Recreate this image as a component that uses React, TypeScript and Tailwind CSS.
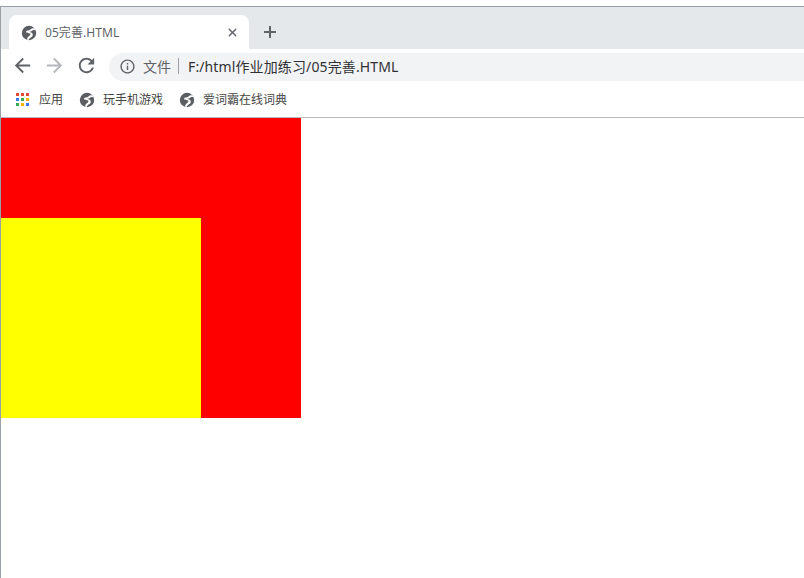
import { X } from 'lucide-react'

const font = "font-['Noto_Sans','Noto_Sans_CJK_SC',sans-serif]"

function NavIcon({ d, className }: { d: string; className: string }) {
  return (
    <svg viewBox="0 0 24 24" className={`h-[23px] w-[23px] shrink-0 fill-current ${className}`}>
      <path d={d} />
    </svg>
  )
}

function Globe() {
  return (
    <svg viewBox="0 0 16 16" className="h-[16px] w-[16px] shrink-0">
      <circle cx="8" cy="8" r="7.2" fill="#5a5d61" />
      <path d="M13.6 3.6C12 2.9 10.6 3.2 9.8 4.2 9 5.2 7.6 5.4 6.4 5.6 5.3 5.8 4.7 6.8 5.4 7.6 6.2 8.4 8 8 9 8.6 9.9 9.2 9.3 10.4 8.3 10.9 7.2 11.5 6.2 12.6 6 14.6L7.6 14.9C8.4 13.4 9.4 12.6 10.5 12 12 11.2 12.3 9.2 11 8 10 7 8.5 7.2 8 7 9.2 6.9 10.6 6.4 11.4 5.5 12 4.9 13 4.9 14.2 5.2Z" fill="#ffffff" />
    </svg>
  )
}

function AppsGrid() {
  const colors = [
    'bg-[#e0493a]', 'bg-[#e0493a]', 'bg-[#e0493a]',
    'bg-[#3b78e7]', 'bg-[#3aa757]', 'bg-[#f5b400]',
    'bg-[#3aa757]', 'bg-[#f5b400]', 'bg-[#3b78e7]',
  ]
  return (
    <div className="grid h-[13px] w-[13px] grid-cols-3 gap-[2px]">
      {colors.map((c, i) => (
        <span key={i} className={`h-[3px] w-[3px] ${c}`} />
      ))}
    </div>
  )
}

function Bookmark({ label }: { label: string }) {
  return (
    <div className="flex items-center gap-[8px]">
      <Globe />
      <span className="text-[12px] text-[#444]">{label}</span>
    </div>
  )
}

export default function App() {
  return (
    <div className={`h-[578px] w-[804px] overflow-hidden bg-white ${font}`}>
      <div className="h-[6px] bg-white" />
      <div className="h-[572px] border-t border-l border-[#9aa0a6]">
        {/* tab strip */}
        <div className="flex h-[42px] items-end bg-[#e5e8eb] pl-[8px]">
          <div className="flex h-[34px] w-[240px] items-center rounded-t-[8px] bg-white pt-[1px] pr-[10px] pl-[12px]">
            <Globe />
            <span className="ml-[8px] flex-1 text-[12px] tracking-[0.07px] text-[#5f6368]">05完善.HTML</span>
            <X className="h-[13px] w-[13px] text-[#5f6368]" strokeWidth={2.5} />
          </div>
          <div className="ml-[13px] flex h-[34px] items-center">
            <svg viewBox="0 0 16 16" className="h-[16px] w-[16px] fill-[#5f6368]">
              <path d="M7 2h2v5h5v2H9v5H7V9H2V7h5z" />
            </svg>
          </div>
        </div>

        {/* toolbar */}
        <div className="flex h-[32px] items-end bg-white">
          <div className="flex h-[32px] w-[108px] items-center gap-[9px] pl-[10px]">
            <NavIcon className="text-[#5f6368]" d="M20 11H7.83l5.59-5.59L12 4l-8 8 8 8 1.41-1.41L7.83 13H20v-2z" />
            <NavIcon className="text-[#b4b6b9]" d="M12 4l-1.41 1.41L16.17 11H4v2h12.17l-5.58 5.59L12 20l8-8z" />
            <NavIcon className="text-[#5f6368]" d="M17.65 6.35C16.2 4.9 14.21 4 12 4c-4.42 0-7.99 3.58-7.99 8s3.57 8 7.99 8c3.73 0 6.84-2.55 7.73-6h-2.08c-.82 2.33-3.04 4-5.65 4-3.31 0-6-2.69-6-6s2.69-6 6-6c1.66 0 3.14.69 4.22 1.78L13 11h7V4l-2.35 2.35z" />
          </div>
          <div className="flex h-[28px] flex-1 items-center rounded-l-full bg-[#f2f3f4] pb-[2px] pl-[10px]">
            <svg viewBox="0 0 24 24" className="h-[17px] w-[17px] fill-[#5f6368]">
              <path d="M11 7h2v2h-2zm0 4h2v6h-2zm1-9C6.48 2 2 6.48 2 12s4.48 10 10 10 10-4.48 10-10S17.52 2 12 2zm0 18c-4.41 0-8-3.59-8-8s3.59-8 8-8 8 3.59 8 8-3.59 8-8 8z" />
            </svg>
            <span className="ml-[7px] text-[14px] text-[#5f6368]">文件</span>
            <span className="mx-[7px] h-[16px] w-px bg-[#9aa0a6]" />
            <span className="ml-[2px] text-[14px] tracking-[0.12px] text-[#303134]">F:/html作业加练习/05完善.HTML</span>
          </div>
        </div>

        {/* bookmarks */}
        <div className="flex h-[37px] items-center border-b border-[#b8babd] bg-white pt-[1px] pl-[15px]">
          <div className="flex items-center gap-[10px]">
            <AppsGrid />
            <span className="text-[12px] text-[#444]">应用</span>
          </div>
          <div className="ml-[16px]">
            <Bookmark label="玩手机游戏" />
          </div>
          <div className="ml-[16px]">
            <Bookmark label="爱词霸在线词典" />
          </div>
        </div>

        {/* page */}
        <div className="flex h-[300px] w-[300px] items-end bg-[#ff0000]">
          <div className="h-[200px] w-[200px] bg-[#ffff00]" />
        </div>
      </div>
    </div>
  )
}
